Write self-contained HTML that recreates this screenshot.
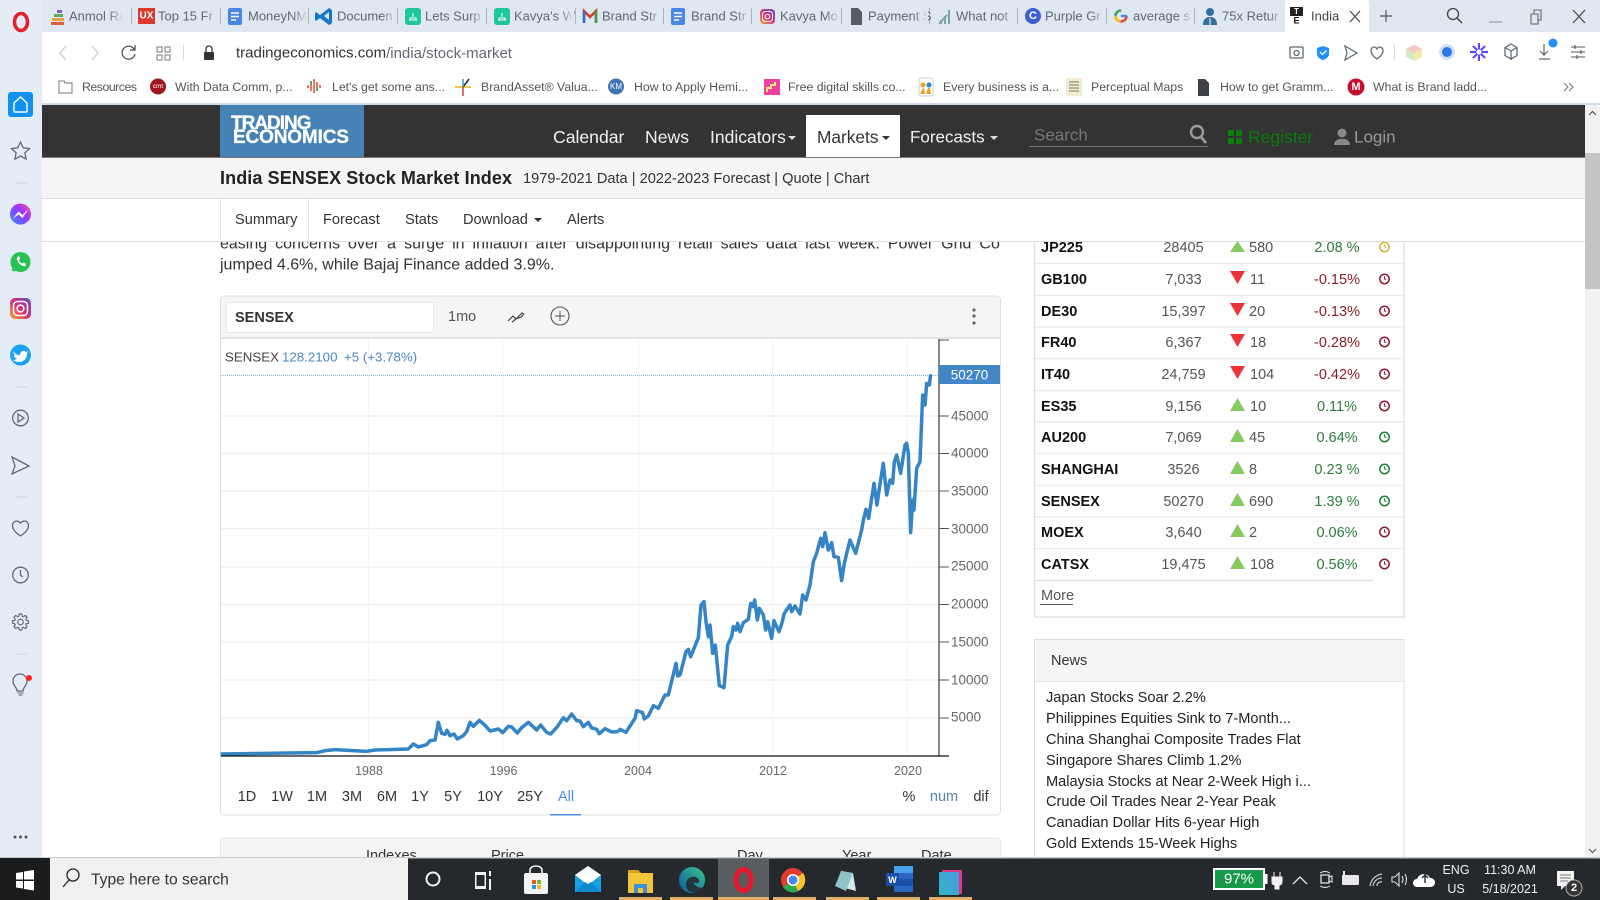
<!DOCTYPE html>
<html><head><meta charset="utf-8"><title>India SENSEX Stock Market Index</title>
<style>
html,body{margin:0;padding:0;width:1600px;height:900px;overflow:hidden;background:#fff}
svg{display:block}
text{font-family:"Liberation Sans",Arial,sans-serif;dominant-baseline:central}
.t{font-size:13px;fill:#5d6976}
.b{font-size:12.3px;fill:#555}
.n{font-size:17.3px;fill:#f2f2f2}
.p{font-size:14.6px;fill:#333}
.a{font-size:13.5px;fill:#666}
.y{font-size:12.5px;fill:#666;text-anchor:middle}
.r{font-size:14.5px;fill:#333;text-anchor:middle}
.nm{font-size:14.5px;font-weight:bold;fill:#111}
.pr{font-size:14.5px;fill:#555;text-anchor:middle}
.ch{font-size:14.5px;fill:#555}
.g{font-size:14.5px;fill:#2f7a3a;text-anchor:middle}
.d{font-size:14.5px;fill:#8b1f28;text-anchor:middle}
.w{font-size:14.6px;fill:#222}
.s{fill:none;stroke:#5e6a75;stroke-width:1.3}
.tr{font-size:12.5px;fill:#f0f0f0;text-anchor:middle}
.p,.r,.nm,.pr,.ch,.g,.d,.w,.n{transform:translateY(1px)}
</style></head><body>
<svg width="1600" height="900" viewBox="0 0 1600 900" xmlns="http://www.w3.org/2000/svg">
<defs>
<linearGradient id="fd"><stop offset="0" stop-color="#dfe7f0" stop-opacity="0"/><stop offset="1" stop-color="#dfe7f0"/></linearGradient>
<linearGradient id="ig" x1="0" y1="1" x2="1" y2="0"><stop offset="0" stop-color="#f9a72b"/><stop offset=".5" stop-color="#d92d7a"/><stop offset="1" stop-color="#5a4fcf"/></linearGradient>
<linearGradient id="ms" x1="0" y1="1" x2="1" y2="0"><stop offset="0" stop-color="#2b8bff"/><stop offset=".6" stop-color="#a033ff"/><stop offset="1" stop-color="#ff5c87"/></linearGradient>
<linearGradient id="ed" x1="0" y1="1" x2="1" y2="0"><stop offset="0" stop-color="#0c59a4"/><stop offset="1" stop-color="#37c58c"/></linearGradient>
<linearGradient id="st" x1="0" y1="1" x2="1" y2="0"><stop offset="0" stop-color="#2fb6c8"/><stop offset="1" stop-color="#4a9be0"/></linearGradient>
<g id="ck" fill="none" stroke="currentColor"><circle r="4.7" stroke-width="1.5"/><path d="M0 0V-2.6M0 0L1.8 .6" stroke-width="1"/></g>
<path id="tooth" d="M-1.8-5.6L-1.2-8H1.2L1.8-5.6L2.69-5.23" fill="none" stroke="#5e6a75" stroke-width="1.2"/>
<clipPath id="pg"><rect x="42" y="242" width="1543" height="616"/></clipPath>
</defs>

<!-- Browser chrome background -->
<rect width="1600" height="900" fill="#fff"/>
<rect width="1600" height="32" fill="#dfe7f0"/>
<rect y="0" width="42" height="858" fill="#e4ecf5"/>
<rect x="42" y="32" width="1558" height="72" fill="#fff"/>
<rect x="42" y="103" width="1558" height="2" fill="#cfdbe8"/>

<!-- Opera logo -->
<ellipse cx="21" cy="22" rx="6.5" ry="8.5" fill="none" stroke="#e2202f" stroke-width="3.6"/>

<!-- Tabs -->
<g fill="#aab4be">
<rect x="131" y="8" width="1" height="16"/><rect x="220" y="8" width="1" height="16"/><rect x="308" y="8" width="1" height="16"/><rect x="397" y="8" width="1" height="16"/><rect x="486" y="8" width="1" height="16"/><rect x="575" y="8" width="1" height="16"/><rect x="663" y="8" width="1" height="16"/><rect x="751" y="8" width="1" height="16"/><rect x="841" y="8" width="1" height="16"/><rect x="929" y="8" width="1" height="16"/><rect x="1017" y="8" width="1" height="16"/><rect x="1106" y="8" width="1" height="16"/><rect x="1194" y="8" width="1" height="16"/>
</g>
<g class="tabs">
<text x="69" y="16" class="t">Anmol Ra</text><text x="158" y="16" class="t">Top 15 Fr</text><text x="248" y="16" class="t">MoneyNM</text><text x="337" y="16" class="t">Documen</text><text x="425" y="16" class="t">Lets Surp</text><text x="514" y="16" class="t">Kavya's W</text><text x="602" y="16" class="t">Brand Str</text><text x="691" y="16" class="t">Brand Str</text><text x="780" y="16" class="t">Kavya Mo</text><text x="868" y="16" class="t">Payment S</text><text x="956" y="16" class="t">What not</text><text x="1045" y="16" class="t">Purple Gr</text><text x="1133" y="16" class="t">average s</text><text x="1222" y="16" class="t">75x Retur</text>
</g>
<rect x="108" y="6" width="16" height="20" fill="url(#fd)"/><rect x="124" y="6" width="6" height="20" fill="#dfe7f0"/>
<rect x="204" y="6" width="15" height="20" fill="url(#fd)"/>
<rect x="293" y="6" width="15" height="20" fill="url(#fd)"/>
<rect x="382" y="6" width="15" height="20" fill="url(#fd)"/>
<rect x="470" y="6" width="15" height="20" fill="url(#fd)"/>
<rect x="559" y="6" width="15" height="20" fill="url(#fd)"/>
<rect x="648" y="6" width="15" height="20" fill="url(#fd)"/>
<rect x="736" y="6" width="15" height="20" fill="url(#fd)"/>
<rect x="825" y="6" width="15" height="20" fill="url(#fd)"/>
<rect x="913" y="6" width="15" height="20" fill="url(#fd)"/>
<rect x="1001" y="6" width="15" height="20" fill="url(#fd)"/>
<rect x="1090" y="6" width="15" height="20" fill="url(#fd)"/>
<rect x="1178" y="6" width="15" height="20" fill="url(#fd)"/>
<rect x="1268" y="6" width="16" height="20" fill="url(#fd)"/>
<!-- Tab icons -->
<rect x="57" y="10" width="5" height="3" fill="#7b5ec7"/><rect x="54" y="14" width="9" height="3" fill="#5fa85f"/><rect x="52" y="18" width="12" height="3" fill="#e8a13c"/><rect x="51" y="22" width="13" height="3" fill="#e0603c"/>
<rect x="138" y="8" width="17" height="16" fill="#d93a2b"/><text x="146.500" y="16" style="font-size:10px;fill:#fff;text-anchor:middle;font-weight:bold">UX</text>
<rect x="228" y="8" width="14" height="17" rx="2" fill="#4a86e8"/><path d="M231 13h8M231 16.500h8M231 20h5" stroke="#fff" stroke-width="1.5"/>
<path d="M329 8l3 2v13l-3 2-9-7-4 3-1-1v-7l1-1 4 3zM329 12l-5 4 5 4z" fill="#1477cc" fill-rule="evenodd"/>
<rect x="405" y="8" width="16" height="17" rx="3" fill="#1fc79a"/><path d="M409 20h8M413 13v4M410 20v-2h6v2" stroke="#fff" stroke-width="1" fill="none"/>
<rect x="494" y="8" width="16" height="17" rx="3" fill="#1fc79a"/><path d="M498 20h8M502 13v4M499 20v-2h6v2" stroke="#fff" stroke-width="1" fill="none"/>
<path d="M584 23V11l6 6 6-6v12" fill="none" stroke="#d93a2b" stroke-width="2.500"/><path d="M584 23v-12" stroke="#2f6fd6" stroke-width="2.500"/><path d="M596 23v-12" stroke="#39a050" stroke-width="2.500"/>
<rect x="671" y="8" width="14" height="17" rx="2" fill="#4a86e8"/><path d="M674 13h8M674 16.500h8M674 20h5" stroke="#fff" stroke-width="1.500"/>
<rect x="760" y="9" width="15" height="15" rx="4" fill="url(#ig)"/><rect x="762.500" y="11.500" width="10" height="10" rx="3" fill="none" stroke="#fff"/><circle cx="767.500" cy="16.500" r="2.300" fill="none" stroke="#fff"/>
<path d="M851 8h7l4 4v13h-11z" fill="#555c63"/>
<path d="M939 24l8-9M941 24v-4M945 24v-8M949 24V10" stroke="#7da4a0" stroke-width="2" fill="none"/>
<circle cx="1033" cy="16" r="8" fill="#3f5fd0"/><text x="1033" y="16" style="font-size:11px;fill:#fff;text-anchor:middle;font-weight:bold">C</text>
<circle cx="1121" cy="16" r="5.500" fill="none" stroke="#e6443a" stroke-width="2.500" stroke-dasharray="9 26"/><circle cx="1121" cy="16" r="5.500" fill="none" stroke="#3aa757" stroke-width="2.500" stroke-dasharray="9 26" stroke-dashoffset="-17"/><circle cx="1121" cy="16" r="5.500" fill="none" stroke="#fbbc05" stroke-width="2.500" stroke-dasharray="8 27" stroke-dashoffset="-9"/><path d="M1121 16h6" stroke="#4285f4" stroke-width="2.300"/>
<circle cx="1210" cy="12" r="4" fill="#33709f"/><path d="M1203 25c0-6 3-8 7-8s7 2 7 8z" fill="#33709f"/><path d="M1210 18v7" stroke="#fff"/>

<!-- Active tab -->
<path d="M1285 32V3q0-3 3-3h78q3 0 3 3v29z" fill="#fff"/>
<rect x="1290" y="7" width="13" height="9" fill="#222"/><text x="1296.500" y="11.500" style="font-size:8px;fill:#fff;text-anchor:middle;font-weight:bold">T</text>
<text x="1296.500" y="20.500" style="font-size:9px;fill:#111;text-anchor:middle;font-weight:bold">E</text>
<text x="1311" y="16" class="t" fill="#333" style="fill:#444">India</text>
<path d="M1350 11l10 11M1360 11l-10 11" stroke="#444" stroke-width="1.200"/>
<path d="M1380 16h12M1386 10v12" stroke="#555" stroke-width="1.200"/>
<!-- window controls -->
<circle cx="1453" cy="14" r="5.500" fill="none" stroke="#444" stroke-width="1.300"/><path d="M1457 18l5 5" stroke="#444" stroke-width="1.500"/>
<path d="M1489 22h13" stroke="#99a2ab" stroke-width="1.300"/>
<path d="M1531 14h7v10h-7zM1534 14v-4h7v10h-3" fill="none" stroke="#666" stroke-width="1.100"/>
<path d="M1573 10l12 13M1585 10l-12 13" stroke="#444" stroke-width="1.200"/>

<!-- Address bar -->
<path d="M66 46l-6 7 6 7M92 46l6 7-6 7" fill="none" stroke="#c6ccd3" stroke-width="1.300"/>
<path d="M134 49a6.500 6.500 0 1 0 1 5M135 45v5h-5" fill="none" stroke="#444" stroke-width="1.200"/>
<path d="M157 47h5v5h-5zM165 47h5v5h-5zM157 55h5v5h-5zM165 55h5v5h-5z" fill="none" stroke="#777"/>
<rect x="183" y="45" width="1" height="15" fill="#d5dae0"/>
<rect x="204" y="52" width="10" height="8" rx="1" fill="#333"/><path d="M206 52v-3a3 3 0 0 1 6 0v3" fill="none" stroke="#333" stroke-width="1.300"/>
<text x="236" y="53" style="font-size:15px;fill:#333">tradingeconomics.com<tspan fill="#667">/india/stock-market</tspan></text>
<!-- right icons -->
<rect x="1290" y="47" width="13" height="11" rx="1" class="s"/><circle cx="1296.500" cy="53" r="2.500" class="s"/>
<path d="M1323 46l6 2v6c0 3-3 5-6 6-3-1-6-3-6-6v-6z" fill="#1e90ff"/><path d="M1320 52l2.500 2.500 4-4" stroke="#fff" stroke-width="1.300" fill="none"/>
<path d="M1345 46l12 7-12 7 2-7z" class="s"/>
<path d="M1377 59c-9-6-6-12-3-12 2 0 3 2 3 2s1-2 3-2c3 0 6 6-3 12z" class="s"/>
<rect x="1394" y="45" width="1" height="15" fill="#d5dae0"/>
<path d="M1414 45l8 4v8l-8 4-8-4v-8z" fill="#cdeacb"/><path d="M1414 45l8 4-8 4-8-4z" fill="#f7c7c0"/><path d="M1414 53l8-4v8l-8 4z" fill="#f5e6a8"/>
<circle cx="1447" cy="52" r="8" fill="#cfe1fb"/><circle cx="1447" cy="52" r="5" fill="#2a78e4"/>
<g stroke="#5a4bf0" stroke-width="2.200"><path d="M1479 43v18M1470 52h18M1473 46l12 12M1485 46l-12 12"/></g><circle cx="1479" cy="52" r="2.600" fill="#fff"/>
<path d="M1511 44l6 3.500v8l-6 3.500-6-3.500v-8zM1505 47.500l6 3.500 6-3.500M1511 51v9" class="s"/>
<path d="M1544 44v11M1540 51l4 4 4-4M1539 59h11" fill="none" stroke="#666" stroke-width="1.200"/><circle cx="1553" cy="43" r="4.500" fill="#1e90ff"/>
<path d="M1571 47h14M1571 52h14M1571 57h14M1575 45v4M1581 50v4M1577 55v4" stroke="#555" stroke-width="1.100" fill="none"/>

<!-- Bookmarks -->
<path d="M59 81h5l1 2h7v10H59z" fill="none" stroke="#777"/>
<text x="82" y="87" class="b" textLength="55">Resources</text>
<circle cx="158" cy="86.500" r="8" fill="#a01620"/><text x="158" y="86.500" style="font-size:6.500px;fill:#fff;text-anchor:middle">cmt</text>
<text x="175" y="87" class="b">With Data Comm, p...</text>
<path d="M308 85v3M311 81v10M314 79v14M317 82v9M320 85v3" fill="none" stroke="#e0563c" stroke-width="1.600"/><path d="M311 81v4M317 87v4" stroke="#2ea56b" stroke-width="1.600"/>
<text x="332" y="87" class="b">Let's get some ans...</text>
<path d="M455 87h16" stroke="#e5b012" stroke-width="1.500"/><path d="M463 87v9" stroke="#e04040" stroke-width="1.500"/><path d="M463 87l6-8" stroke="#222" stroke-width="1.500"/><path d="M463 87v-8" stroke="#3a9ae0" stroke-width="1.500"/>
<text x="481" y="87" class="b">BrandAsset® Valua...</text>
<circle cx="616" cy="86.500" r="8" fill="#3f74b5"/><text x="616" y="86.500" style="font-size:8px;fill:#fff;text-anchor:middle">KM</text>
<text x="634" y="87" class="b">How to Apply Hemi...</text>
<rect x="764" y="79" width="16" height="16" fill="#ef3fa0"/><path d="M767 92v-4h4v-3h4v-3" fill="none" stroke="#ffe97a" stroke-width="2"/>
<text x="788" y="87" class="b">Free digital skills co...</text>
<rect x="919" y="78" width="14" height="18" rx="2" fill="#fff" stroke="#c5cfd8"/><circle cx="923" cy="85" r="2.500" fill="#f0a020"/><circle cx="929" cy="85" r="2.500" fill="#2a84d0"/><path d="M920 94l3-6h1l1 6zM926 94l2-6h2l1 6z" fill="#f0a020"/>
<text x="943" y="87" class="b">Every business is a...</text>
<rect x="1066" y="78" width="16" height="18" fill="#f3ecd3"/><path d="M1069 82h10M1069 85h10M1069 88h10M1069 91h10" stroke="#776"/>
<text x="1091" y="87" class="b">Perceptual Maps</text>
<path d="M1198 79h7l4 4v13h-11z" fill="#3d4044"/>
<text x="1220" y="87" class="b">How to get Gramm...</text>
<circle cx="1356" cy="87" r="8.500" fill="#c8102e"/><text x="1356" y="87" style="font-size:11px;fill:#fff;font-weight:bold;text-anchor:middle">M</text>
<text x="1373" y="87" class="b">What is Brand ladd...</text>
<path d="M1564 83l4 4-4 4M1569 83l4 4-4 4" fill="none" stroke="#777"/>

<!-- Side rail icons -->
<rect x="8" y="92" width="25" height="25" rx="3" fill="#1292f0"/><path d="M14 103l6.500-6 6.500 6v8q0 1-1 1H15q-1 0-1-1z" fill="none" stroke="#fff" stroke-width="1.400"/>
<path d="M20.500 142l2.700 5.800 6.300.8-4.600 4.300 1.200 6.200-5.600-3.100-5.600 3.100 1.200-6.200-4.600-4.300 6.300-.8z" class="s"/>
<rect x="15" y="182.500" width="12" height="1" fill="#cbd5e0"/>
<circle cx="20.500" cy="214" r="10.500" fill="url(#ms)"/><path d="M12.500 219l6-7.500 4 3.500 6-6-6 9-4-3.500z" fill="#fff"/>
<circle cx="20.500" cy="262" r="10" fill="#29c14f"/><path d="M13 271l2-5" stroke="#29c14f" stroke-width="3"/><path d="M16.500 258c1 5 4 7.500 8.500 8.500l1-2.500-2.500-1.500-1.500 1c-1.500-.8-2.500-2-3-3.500l1.200-1-1.200-3z" fill="#fff"/>
<rect x="10" y="298" width="21" height="21" rx="5" fill="url(#ig)"/><rect x="13.500" y="301.500" width="14" height="14" rx="4" fill="none" stroke="#fff" stroke-width="1.500"/><circle cx="20.500" cy="308.500" r="3.400" fill="none" stroke="#fff" stroke-width="1.500"/>
<circle cx="20.500" cy="355" r="10.500" fill="#1da1f2"/><path d="M13 351c2 3 4 4 7 4 0-4 4-5 6-3l2-1-1 3c0 5-4 8-8 8-2 0-4-.5-6-2 2 0 3-.5 4-1.500-2-.5-3-1.500-3-3.500l1.500.5c-1.500-1-2.500-3-2.500-4.500z" fill="#fff"/>
<rect x="15" y="386.500" width="12" height="1" fill="#cbd5e0"/>
<circle cx="20.500" cy="418" r="7.800" class="s"/><path d="M18 414l6 4-6 4z" class="s"/>
<path d="M12 457l17 9-17 8 3-8z" class="s"/>
<rect x="15" y="496.500" width="12" height="1" fill="#cbd5e0"/>
<path d="M20.500 536c-12-8-8-15-4-15 2 0 4 2 4 2s2-2 4-2c4 0 8 7-4 15z" class="s"/>
<circle cx="20.500" cy="575" r="7.800" class="s"/><path d="M20.500 570v5l2 2" class="s"/>
<g transform="translate(20.500,622)"><circle r="2.800" class="s" style="stroke-width:1.100"/><use href="#tooth"/><use href="#tooth" transform="rotate(45)"/><use href="#tooth" transform="rotate(90)"/><use href="#tooth" transform="rotate(135)"/><use href="#tooth" transform="rotate(180)"/><use href="#tooth" transform="rotate(225)"/><use href="#tooth" transform="rotate(270)"/><use href="#tooth" transform="rotate(315)"/></g>
<rect x="15" y="653.500" width="12" height="1" fill="#cbd5e0"/>
<path d="M17 691c0-4-4-5-4-10a7 7 0 0 1 14 0c0 5-4 6-4 10z" class="s"/><path d="M17.500 693h6M18.500 695h4" stroke="#5e6a75"/><circle cx="29" cy="678" r="3" fill="#f22"/>
<g fill="#555"><circle cx="15" cy="837" r="1.500"/><circle cx="20.500" cy="837" r="1.500"/><circle cx="26" cy="837" r="1.500"/></g>

<!-- Page content below the fixed header -->
<g clip-path="url(#pg)">
<text x="220" y="243" class="p" style="font-size:16px;word-spacing:3.55px">easing concerns over a surge in inflation after disappointing retail sales data last week. Power Grid Co</text>
<text x="220" y="264" class="p" style="font-size:16px">jumped 4.6%, while Bajaj Finance added 3.9%.</text>

<!-- Chart card -->
<rect x="220.500" y="296" width="780" height="519" rx="4" fill="#fff" stroke="#ddd"/>
<path d="M221 338V300q0-3.500 3.500-3.500H997q3 0 3 3.500v38z" fill="#f5f5f5"/>
<rect x="220" y="337" width="781" height="2" fill="#e4e4e4"/>
<rect x="226.500" y="302.500" width="207" height="30" fill="#fff" stroke="#e8e8e8"/>
<text x="235" y="318" style="font-size:14.500px;font-weight:bold;fill:#333">SENSEX</text>
<text x="448" y="317" style="font-size:14.500px;fill:#555">1mo</text>
<path d="M508 321l5-5 3 3 6-6 2 1M512 322l4-3 5-2 3-3" fill="none" stroke="#444" stroke-width="1.200"/>
<circle cx="560" cy="316" r="9" fill="none" stroke="#555" stroke-width="1.100"/><path d="M555 316h10M560 311v10" stroke="#555"/>
<g fill="#666"><circle cx="974" cy="310" r="1.600"/><circle cx="974" cy="316" r="1.600"/><circle cx="974" cy="323" r="1.600"/></g>

<!-- Grid -->
<g stroke="#f0f4f8"><path d="M368.500 339V755M502.500 339V755M638.500 339V755M772.500 339V755M907.500 339V755"/></g>
<g stroke="#eee" stroke-width="1.300"><path d="M221 416H939M221 453.500H939M221 491H939M221 528.500H939M221 567H939M221 604.500H939M221 642H939M221 680H939M221 718H939"/></g>
<path d="M221 375.500H939" stroke="#8db6dc" stroke-dasharray="1 1"/>

<!-- Series -->
<g fill="none" stroke="#3484c6" stroke-width="10.500" stroke-linejoin="round" transform="translate(200,370) scale(.33333)">
<polyline points="62,1152 350,1148 375,1142 405,1139 500,1144 525,1140 625,1137 640,1122 655,1131 680,1124 690,1112 705,1110 715,1057 725,1090 735,1093 741,1081 750,1097 762,1092 772,1107 790,1097 800,1085 810,1057 820,1069 838,1051 855,1066 870,1083 895,1077 908,1088 925,1069 935,1071 952,1089 965,1073 985,1057 1010,1080 1022,1065 1040,1087 1052,1092 1072,1070 1090,1043 1100,1052 1115,1032 1130,1052 1140,1053 1150,1070 1165,1057 1175,1074 1190,1078 1198,1091 1215,1076 1235,1086 1255,1085"/>
</g>
<g fill="none" stroke="#3484c6" stroke-width="10.500" stroke-linejoin="round" transform="translate(600,340) scale(.33333)">
<polyline points="55,1175 60,1168 78,1177 105,1135 110,1112 128,1118 133,1137 145,1128 160,1097 175,1105 195,1065 205,1065 228,970 233,1008 240,1005 258,935 265,928 272,950 295,893 303,795 312,785 318,845 325,890 330,855 338,940 346,915 358,1037 372,1043 383,915 395,890 400,860 408,870 413,850 420,875 430,848 445,838 452,790 460,800 464,780 472,840 478,805 490,825 497,870 503,845 515,895 522,842 537,875 545,852 553,820 570,795 575,815 585,798 600,822 608,765 618,780 630,735 640,665 650,640 662,595 668,620 675,578 685,630 695,608 702,650 715,652 725,722 733,670 750,600 767,640 785,570 790,540 798,508 806,535 812,495 822,430 831,495 838,445 850,370 860,465 870,420 878,430 883,365 890,345 902,400 915,315 920,310 925,340 932,578 938,480 942,510 950,385 960,365 968,165 975,195 980,130 988,135 992,103"/>
</g>

<text x="225" y="357" style="font-size:13.300px;fill:#444">SENSEX</text>
<text x="282" y="357" style="font-size:13.300px;fill:#4a86c5">128.2100</text>
<text x="344" y="357" style="font-size:13.300px;fill:#4a86c5">+5 (+3.78%)</text>

<!-- Axes -->
<path d="M939 339V756" stroke="#555" stroke-width="1.400"/>
<path d="M221 756H949" stroke="#111" stroke-width="1.300"/>
<path d="M939 340h10M939 416h10M939 453.500h10M939 491h10M939 528.500h10M939 567h10M939 604.500h10M939 642h10M939 680h10M939 718h10" stroke="#555"/>
<rect x="939" y="365" width="61" height="19" fill="#4286c6"/>
<text x="969.500" y="375" style="font-size:13.500px;fill:#fff;text-anchor:middle">50270</text>
<text x="951" y="416" class="a">45000</text><text x="951" y="453" class="a">40000</text><text x="951" y="491" class="a">35000</text><text x="951" y="529" class="a">30000</text><text x="951" y="566" class="a">25000</text><text x="951" y="604" class="a">20000</text><text x="951" y="642" class="a">15000</text><text x="951" y="680" class="a">10000</text><text x="951" y="717" class="a">5000</text>
<text x="369" y="771" class="y">1988</text><text x="503.500" y="771" class="y">1996</text><text x="638" y="771" class="y">2004</text><text x="773" y="771" class="y">2012</text><text x="908" y="771" class="y">2020</text>

<!-- Range buttons -->
<text x="247" y="796" class="r">1D</text><text x="282" y="796" class="r">1W</text><text x="317" y="796" class="r">1M</text><text x="352" y="796" class="r">3M</text><text x="387" y="796" class="r">6M</text><text x="420" y="796" class="r">1Y</text><text x="453" y="796" class="r">5Y</text><text x="490" y="796" class="r">10Y</text><text x="530" y="796" class="r">25Y</text><text x="566" y="796" class="r" style="fill:#4a90e2">All</text>
<rect x="550" y="814" width="31" height="1.500" fill="#4a90e2"/>
<text x="909" y="796" class="r">%</text><text x="944" y="796" class="r" style="fill:#5a7fb0">num</text><text x="981" y="796" class="r">dif</text>

<!-- Indexes table head -->
<path d="M220.500 858V841q0-3 3-3H997q3.500 0 3.500 3v17z" fill="#f5f5f5" stroke="#e8e8e8"/>
<text x="366" y="856" style="font-size:14.500px;fill:#333">Indexes</text><text x="491" y="856" style="font-size:14.500px;fill:#333">Price</text><text x="737" y="856" style="font-size:14.500px;fill:#333">Day</text><text x="842" y="856" style="font-size:14.500px;fill:#333">Year</text><text x="921" y="856" style="font-size:14.500px;fill:#333">Date</text>

<!-- Markets side table -->
<path d="M1034.500 240V617H1404V240" fill="#fff" stroke="#ddd" stroke-width="1.300"/>
<g stroke="#e8e8e8" stroke-width="1.200"><path d="M1035 263.500H1403M1035 295.500H1403M1035 327H1403M1035 358.500H1403M1035 390.500H1403M1035 422H1403M1035 453.500H1403M1035 485.500H1403M1035 517H1403M1035 548.500H1403"/></g>
<path d="M1035 580.500H1373" stroke="#ddd" stroke-width="1.200"/>
<g>
<text x="1041" y="247" class="nm">JP225</text><text x="1183.500" y="247" class="pr">28405</text><polygon points="1230,252 1237.500,241 1245,252" fill="#86c95e"/><text x="1249" y="247" class="ch">580</text><text x="1337" y="247" class="g">2.08 %</text><use href="#ck" x="1384.500" y="247" color="#d8b434"/>
<text x="1041" y="279" class="nm">GB100</text><text x="1183.500" y="279" class="pr">7,033</text><polygon points="1230,271 1245,271 1237.500,284" fill="#ee3338"/><text x="1250" y="279" class="ch">11</text><text x="1337" y="279" class="d">-0.15%</text><use href="#ck" x="1384.500" y="279" color="#8c1a2a"/>
<text x="1041" y="311" class="nm">DE30</text><text x="1183.500" y="311" class="pr">15,397</text><polygon points="1230,303 1245,303 1237.500,316" fill="#ee3338"/><text x="1249" y="311" class="ch">20</text><text x="1337" y="311" class="d">-0.13%</text><use href="#ck" x="1384.500" y="311" color="#8c1a2a"/>
<text x="1041" y="342" class="nm">FR40</text><text x="1183.500" y="342" class="pr">6,367</text><polygon points="1230,334 1245,334 1237.500,347" fill="#ee3338"/><text x="1250" y="342" class="ch">18</text><text x="1337" y="342" class="d">-0.28%</text><use href="#ck" x="1384.500" y="342" color="#8c1a2a"/>
<text x="1041" y="374" class="nm">IT40</text><text x="1183.500" y="374" class="pr">24,759</text><polygon points="1230,366 1245,366 1237.500,379" fill="#ee3338"/><text x="1250" y="374" class="ch">104</text><text x="1337" y="374" class="d">-0.42%</text><use href="#ck" x="1384.500" y="374" color="#8c1a2a"/>
<text x="1041" y="406" class="nm">ES35</text><text x="1183.500" y="406" class="pr">9,156</text><polygon points="1230,411 1237.500,398 1245,411" fill="#86c95e"/><text x="1250" y="406" class="ch">10</text><text x="1337" y="406" class="g">0.11%</text><use href="#ck" x="1384.500" y="406" color="#8c1a2a"/>
<text x="1041" y="437" class="nm">AU200</text><text x="1183.500" y="437" class="pr">7,069</text><polygon points="1230,442 1237.500,429 1245,442" fill="#86c95e"/><text x="1249" y="437" class="ch">45</text><text x="1337" y="437" class="g">0.64%</text><use href="#ck" x="1384.500" y="437" color="#1b8038"/>
<text x="1041" y="469" class="nm">SHANGHAI</text><text x="1183.500" y="469" class="pr">3526</text><polygon points="1230,474 1237.500,461 1245,474" fill="#86c95e"/><text x="1249" y="469" class="ch">8</text><text x="1337" y="469" class="g">0.23 %</text><use href="#ck" x="1384.500" y="469" color="#1b8038"/>
<text x="1041" y="501" class="nm">SENSEX</text><text x="1183.500" y="501" class="pr">50270</text><polygon points="1230,506 1237.500,493 1245,506" fill="#86c95e"/><text x="1249" y="501" class="ch">690</text><text x="1337" y="501" class="g">1.39 %</text><use href="#ck" x="1384.500" y="501" color="#1b8038"/>
<text x="1041" y="532" class="nm">MOEX</text><text x="1183.500" y="532" class="pr">3,640</text><polygon points="1230,537 1237.500,524 1245,537" fill="#86c95e"/><text x="1249" y="532" class="ch">2</text><text x="1337" y="532" class="g">0.06%</text><use href="#ck" x="1384.500" y="532" color="#8c1a2a"/>
<text x="1041" y="564" class="nm">CATSX</text><text x="1183.500" y="564" class="pr">19,475</text><polygon points="1230,569 1237.500,556 1245,569" fill="#86c95e"/><text x="1250" y="564" class="ch">108</text><text x="1337" y="564" class="g">0.56%</text><use href="#ck" x="1384.500" y="564" color="#8c1a2a"/>
</g>
<text x="1041" y="596" style="font-size:14.500px;fill:#555">More</text>
<rect x="1040" y="604" width="33" height="1" fill="#555"/>

<!-- News -->
<rect x="1034.500" y="639.500" width="369.500" height="240" fill="#fff" stroke="#ddd"/>
<rect x="1035" y="640" width="369" height="42" fill="#f5f5f5"/>
<rect x="1035" y="681" width="369" height="1" fill="#e5e5e5"/>
<text x="1051" y="661" style="font-size:14.500px;fill:#333">News</text>
<text x="1046" y="697" class="w">Japan Stocks Soar 2.2%</text>
<text x="1046" y="718" class="w">Philippines Equities Sink to 7-Month...</text>
<text x="1046" y="739" class="w">China Shanghai Composite Trades Flat</text>
<text x="1046" y="760" class="w">Singapore Shares Climb 1.2%</text>
<text x="1046" y="781" class="w">Malaysia Stocks at Near 2-Week High i...</text>
<text x="1046" y="801" class="w">Crude Oil Trades Near 2-Year Peak</text>
<text x="1046" y="822" class="w">Canadian Dollar Hits 6-year High</text>
<text x="1046" y="843" class="w">Gold Extends 15-Week Highs</text>
</g>

<!-- Fixed site header -->
<rect x="42" y="105" width="1543" height="52" fill="#333"/>
<rect x="220" y="105" width="144" height="52" fill="#4682b4"/>
<text x="231" y="123.500" style="font-size:19px;font-weight:bold;fill:#fff;letter-spacing:-1px;stroke:#fff;stroke-width:.3">TRADING</text>
<text x="233" y="137.500" style="font-size:19px;font-weight:bold;fill:#fff;letter-spacing:-.15px;stroke:#fff;stroke-width:.3">ECONOMICS</text>
<text x="553" y="136" class="n" style="font-size:17.600px">Calendar</text>
<text x="645" y="136" class="n" style="font-size:17.600px">News</text>
<text x="710" y="136" class="n" style="font-size:17.500px">Indicators</text>
<path d="M788 136h8l-4 4z" fill="#ddd"/>
<rect x="806" y="115" width="94" height="42" fill="#fff"/>
<text x="817" y="136" class="n" style="fill:#333">Markets</text>
<path d="M882 136h8l-4 4z" fill="#333"/>
<text x="910" y="136" class="n" style="font-size:17px">Forecasts</text>
<path d="M990 136h8l-4 4z" fill="#ddd"/>
<text x="1034" y="135" style="font-size:17px;fill:#777">Search</text>
<rect x="1029" y="146" width="179" height="1" fill="#777"/>
<circle cx="1197" cy="132" r="6" fill="none" stroke="#999" stroke-width="2.400"/><path d="M1201 137l5 6" stroke="#999" stroke-width="2.800"/>
<path d="M1228 130h6v6h-6zM1236 130h6v6h-6zM1228 138h6v6h-6zM1236 138h6v6h-6z" fill="#0a7d0a"/>
<text x="1248" y="137" style="font-size:17.500px;fill:#0b7a0b">Register</text>
<circle cx="1342" cy="133" r="4.500" fill="#888"/><path d="M1334 145c0-4 3-5 5-6h6c2 1 5 2 5 6z" fill="#888"/>
<text x="1354" y="137" style="font-size:17px;fill:#999">Login</text>

<!-- Title strip -->
<rect x="42" y="157" width="1543" height="41" fill="#f5f5f5"/>
<rect x="42" y="157" width="1543" height="1" fill="#777"/>
<rect x="42" y="198" width="1543" height="1" fill="#ddd"/>
<text x="220" y="178" style="font-size:18px;font-weight:bold;fill:#222" textLength="292">India SENSEX Stock Market Index</text>
<text x="523" y="179" style="font-size:14.600px;fill:#333">1979-2021 Data | 2022-2023 Forecast | Quote | Chart</text>

<!-- Sub nav -->
<rect x="42" y="199" width="1543" height="42" fill="#fff"/>
<rect x="42" y="241" width="1543" height="1" fill="#ddd"/>
<path d="M220.500 199V241M308.500 199V241" stroke="#e5e5e5"/>
<text x="235" y="219" class="p">Summary</text>
<text x="323" y="219" class="p">Forecast</text>
<text x="405" y="219" class="p">Stats</text>
<text x="463" y="219" class="p">Download</text>
<path d="M534 218h8l-4 4z" fill="#333"/>
<text x="567" y="219" class="p">Alerts</text>

<!-- Scrollbar -->
<rect x="1585" y="105" width="15" height="753" fill="#f1f1f1"/>
<rect x="1585" y="153" width="15" height="136" fill="#c4c4c4"/>
<path d="M1589 115l3.500-3.500 3.500 3.500M1589 849l3.500 3.500 3.500-3.500" fill="none" stroke="#555" stroke-width="1.200"/>

<!-- Taskbar -->
<rect y="858" width="1600" height="42" fill="#25282c"/>
<rect width="1600" y="857" height="1.500" fill="#c9c9c9"/>
<rect y="858" width="50" height="42" fill="#1b1c1e"/>
<path d="M16 873l7-1v7.500h-7zM24 871.500l10-1.500v9.500H24zM16 881h7v7.500l-7-1zM24 881h10v9.500l-10-1.500z" fill="#fff"/>
<rect x="50" y="858" width="358" height="42" fill="#f0f0f0"/>
<circle cx="73" cy="875" r="6" fill="none" stroke="#222" stroke-width="1.300"/><path d="M69 880l-6 7" stroke="#222" stroke-width="1.300"/>
<text x="91" y="880" style="font-size:15.600px;fill:#333">Type here to search</text>
<circle cx="433" cy="879" r="6.500" fill="none" stroke="#f2f2f2" stroke-width="2"/>
<path d="M475 872h11v3h-11zM475 886h11v3h-11zM475 875h1.500v11H475zM484.500 875h1.500v11h-1.500zM489 871h2v5h-2zM489 879h2v11h-2z" fill="#f2f2f2"/>
<rect x="524" y="873" width="24" height="21" rx="2" fill="#f4f4f4"/><path d="M530 873v-3a6 4 0 0 1 12 0v3" fill="none" stroke="#f4f4f4" stroke-width="1.600"/>
<rect x="532" y="880" width="4" height="4" fill="#e8542b"/><rect x="537" y="880" width="4" height="4" fill="#7cb82e"/><rect x="532" y="885" width="4" height="4" fill="#1e9be0"/><rect x="537" y="885" width="4" height="4" fill="#f5b921"/>
<path d="M575 875l13-9 13 9v17h-26z" fill="#1ba1e2"/><path d="M575 875l13 10 13-10-13-9z" fill="#fff"/><path d="M575 892l10-10 3 2 3-2 10 10z" fill="#0f8ad0"/>
<path d="M628 870h10l3 3h12v20h-25z" fill="#f3c53a"/><path d="M628 870h10l3 3h-13z" fill="#d9a21c"/><path d="M634 893v-9h13v9h-4v-5h-5v5z" fill="#3d8fd6"/>
<circle cx="692" cy="880" r="13" fill="url(#ed)"/><path d="M686 884c0-5 5-8 9-7 3 .7 5 3 4 5s-5 1-6 0c2 4 6 7 11 5-3 6-11 7-15 4-2-1.500-3-4-3-7z" fill="#25282c" opacity=".85"/>
<rect x="718" y="859" width="51" height="41" fill="#5a5d60"/>
<ellipse cx="743.500" cy="880" rx="7.500" ry="10.500" fill="none" stroke="#e8172c" stroke-width="5"/>
<circle cx="793" cy="880" r="12" fill="#e33b2e"/><path d="M793 880L783 887a12 12 0 0 0 15 4.500z" fill="#2fa84f"/><path d="M793 880l5 11a12 12 0 0 0 5-18z" fill="#f7c52b"/><circle cx="793" cy="880" r="6" fill="#fff"/><circle cx="793" cy="880" r="4.500" fill="#4285f4"/>
<path d="M841 871l12 2 3 18-15-4-5-1z" fill="#d7e8e8"/><path d="M841 871l-6 15 11 5 7-18z" fill="#8fc3c8"/>
<rect x="894" y="866" width="19" height="26" rx="1" fill="#2a66c4"/><rect x="894" y="866" width="19" height="7" fill="#4aa2ec"/><rect x="894" y="879" width="19" height="7" fill="#1b50a8"/>
<rect x="886" y="873" width="13" height="13" fill="#1b4fa5"/><text x="892.500" y="880" style="font-size:9px;fill:#fff;font-weight:bold;text-anchor:middle">W</text>
<rect x="942" y="870" width="20" height="24" fill="#e23a8a"/><rect x="939" y="872" width="20" height="23" fill="url(#st)"/>
<g fill="#dfae68">
<rect x="619" y="897" width="43" height="3"/><rect x="670" y="897" width="43" height="3"/><rect x="718" y="897" width="51" height="3"/><rect x="773" y="897" width="43" height="3"/><rect x="826" y="897" width="43" height="3"/><rect x="877" y="897" width="43" height="3"/><rect x="929" y="897" width="43" height="3"/>
</g>

<!-- Tray -->
<rect x="1214" y="869" width="50" height="20" fill="#179a48" stroke="#fff" stroke-width="2"/><rect x="1265" y="874" width="2.500" height="10" fill="#fff"/>
<text x="1239" y="879" style="font-size:15px;fill:#fff;text-anchor:middle">97%</text>
<path d="M1274 872v5M1280 872v5M1272 877h10v5q0 3-3 3v4h-4v-4q-3 0-3-3z" fill="#f2f2f2" stroke="#f2f2f2"/>
<path d="M1293 884l7-7 7 7" fill="none" stroke="#e8e8e8" stroke-width="1.300"/>
<rect x="1321" y="875" width="8" height="8" fill="none" stroke="#eee" stroke-width="1.200"/><path d="M1329 877l3-1v6l-3-1M1320 873q5-3 10 0M1320 886q5 3 10 0" fill="none" stroke="#eee"/>
<rect x="1342" y="875" width="17" height="10" rx="1" fill="#e8e8e8"/><path d="M1344 875v-4" stroke="#eee" stroke-width="2"/>
<path d="M1370 886a14 14 0 0 1 12-12M1373 886a9 9 0 0 1 9-8M1377 886a4 4 0 0 1 5-4" fill="none" stroke="#c9c9c9" stroke-width="1.200"/>
<path d="M1392 877h3l4-4v13l-4-4h-3zM1402 876q2 3 0 7M1405 874q3 5 0 11" fill="none" stroke="#ddd" stroke-width="1.100"/>
<path d="M1421 887h-4a4 4 0 0 1 0-8 7 7 0 0 1 13-1 4.500 4.500 0 0 1 1 9z" fill="#fff"/><path d="M1425 874v9M1422 878l3-3 3 3" fill="none" stroke="#25282c" stroke-width="1.400"/>
<text x="1456" y="870" class="tr">ENG</text><text x="1456" y="889" class="tr">US</text>
<text x="1510" y="870" class="tr">11:30 AM</text><text x="1510" y="889" class="tr">5/18/2021</text>
<path d="M1557 871h17v15h-9l-4 4v-4h-4z" fill="#f4f4f4"/><path d="M1560 875h11M1560 878h11M1560 881h8" stroke="#777"/>
<circle cx="1574" cy="888" r="8" fill="#333" stroke="#aaa"/><text x="1574" y="888" style="font-size:11px;fill:#fff;font-weight:bold;text-anchor:middle">2</text>
</svg>
</body></html>
